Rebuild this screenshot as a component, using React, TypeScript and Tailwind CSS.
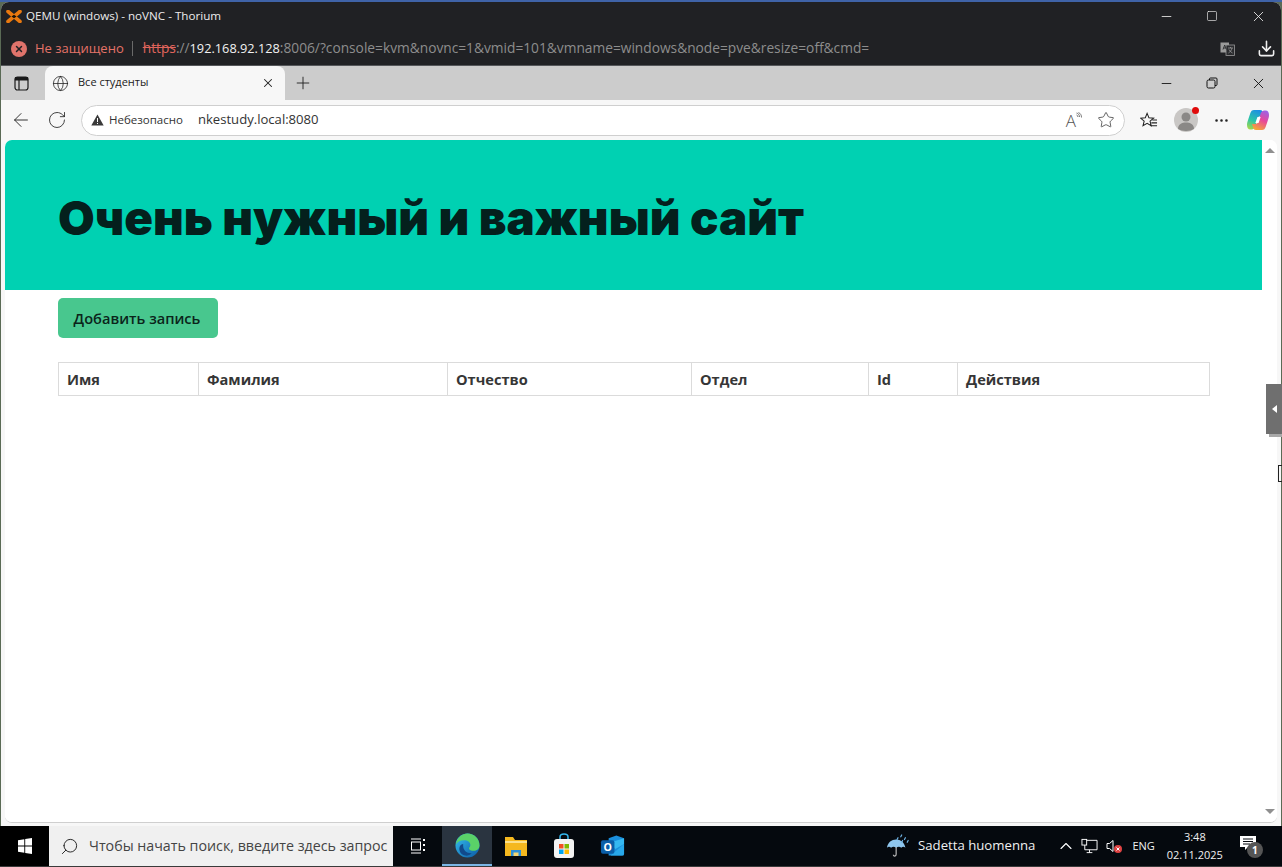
import React from "react";
import { ArrowLeft, RotateCw, X, Minus, Square, Plus, Globe, Star, MoreHorizontal, Download, Search, ChevronUp } from "lucide-react";

const F = { fontFamily: '"Open Sans","Noto Sans",sans-serif' };
const IN = { fontFamily: 'Inter,"Open Sans",sans-serif' };

function ProxmoxLogo() {
  return (
    <svg width="16" height="13" viewBox="0 0 16 13">
      <path d="M2 1.500 14 11.500M14 1.500 2 11.500" stroke="#e9790f" strokeWidth="3.600" strokeLinecap="round" />
      <path d="M8 4.800 10.500 6.500 8 8.200 5.500 6.500z" fill="#1a1208" />
    </svg>
  );
}

function Copilot() {
  const a = "M8 2h6c1.500 0 2.500.8 3 2.500L18 8h-3c-2 0-3 1-3.500 2.500L9.500 18c-.6 2-2 3.500-4 3.500H4.500C2 21.500 1 19.500 1 17c0-2 .5-3.500 1.200-5.500L4.200 5.500C5 3 6 2 8 2z";
  return (
    <svg width="24" height="24" viewBox="0 0 24 24">
      <defs>
        <linearGradient id="cpa" x1="0.600" y1="0" x2="0.200" y2="1"><stop offset="0" stopColor="#1b8fe3" /><stop offset="0.55" stopColor="#2bc5a8" /><stop offset="1" stopColor="#a6d84a" /></linearGradient>
        <linearGradient id="cpb" x1="0.600" y1="0" x2="0.200" y2="1"><stop offset="0" stopColor="#f4a23c" /><stop offset="0.5" stopColor="#e8489a" /><stop offset="1" stopColor="#9a63e8" /></linearGradient>
      </defs>
      <path d={a} fill="url(#cpa)" />
      <path d={a} fill="url(#cpb)" transform="rotate(180 12 12)" />
      <path d="M11.500 9h3.200L12.500 15H9.300z" fill="#fff" />
    </svg>
  );
}

function EdgeLogo() {
  return (
    <svg width="25" height="25" viewBox="0 0 26 26">
      <defs>
        <linearGradient id="edg" x1="0" y1="0" x2="1" y2="1"><stop offset="0" stopColor="#35c1f1" /><stop offset="1" stopColor="#0c59a4" /></linearGradient>
      </defs>
      <circle cx="13" cy="13" r="12.500" fill="url(#edg)" />
      <path d="M1 12C2 4 8 .5 13 .5 20 .5 25.500 6 25.500 13c0 3.500-3 5.500-6 5.500-2.500 0-5-1-5-2.500 0-1 1.500-1.500 1.500-3.500C16 9.500 13 7.500 9.500 7.500 5.500 7.500 2.500 9 1 12z" fill="#5ad168" />
      <path d="M8.500 13.500c0 4.500 4 8 9 7.500-2 2-4.500 3-7 2.500-5-1-7-6-5.500-9.500.6-1.500 2-2.500 3.500-2.500z" fill="#114a8b" />
    </svg>
  );
}

function Folder() {
  return (
    <svg width="24" height="24" viewBox="0 0 24 24">
      <path d="M1 3h8l2 3h12v16H1z" fill="#f5b81f" />
      <path d="M1 7h22v2H1z" fill="#fce08a" />
      <path d="M7 16h10v6H7z" fill="#2b8fd8" />
      <path d="M9.500 18.500h5V22h-5z" fill="#f5d470" />
    </svg>
  );
}

function Store() {
  return (
    <svg width="24" height="26" viewBox="0 0 24 26">
      <path d="M8 7V4c0-2 1.500-3 4-3s4 1 4 3v3" fill="none" stroke="#35b8ee" strokeWidth="1.500" />
      <rect x="2" y="6" width="20" height="19" rx="3" fill="#f3f3f3" />
      <rect x="7" y="11" width="4.500" height="4.500" fill="#f25022" />
      <rect x="12.500" y="11" width="4.500" height="4.500" fill="#7fba00" />
      <rect x="7" y="16.500" width="4.500" height="4.500" fill="#00a4ef" />
      <rect x="12.500" y="16.500" width="4.500" height="4.500" fill="#ffb900" />
    </svg>
  );
}

function Outlook() {
  return (
    <svg width="25" height="24" viewBox="0 0 26 24">
      <path d="M9 4 17 1l8 3v16a2 2 0 0 1-2 2H9z" fill="#1a8fdc" />
      <path d="M9 9l16-5v6l-9 5z" fill="#35b8f1" />
      <path d="M25 10v10a2 2 0 0 1-2 2H11z" fill="#28a8ea" />
      <rect x="1" y="6" width="14" height="14" rx="2" fill="#0a5ea8" />
      <text x="8" y="17" textAnchor="middle" fontSize="11" fontWeight="700" fill="#fff" fontFamily="Open Sans">O</text>
    </svg>
  );
}

function WinLogo() {
  return (
    <svg width="16" height="16" viewBox="0 0 14 16" fill="#fff">
      <path d="M0 2.200 6.300 1.200V7.500H0zM7.200 1 14 0v7.500H7.200zM0 8.400h6.300v6.400L0 13.800zM7.200 8.400H14V16l-6.800-1z" />
    </svg>
  );
}

function Umbrella() {
  return (
    <svg width="24" height="26" viewBox="0 0 26 26">
      <path d="M1 15C2 9 6 6 11 6s9 3 10 9c-1.500-1.500-3-1.500-4.500 0-1.500-1.500-3.500-1.500-5.500 0-2-1.500-4-1.500-5.500 0C4 13.500 2.500 13.500 1 15z" fill="#8fc6ee" />
      <path d="M11 14v8c0 2.500-3 2.500-3 .5" fill="none" stroke="#b9b9b9" strokeWidth="1.300" />
      <path d="M13 4l-1 2M17 1l-1 2M21 4l-1 2M24 7l-1 2M18 7l-1 2" stroke="#6fb4e6" strokeWidth="1.300" strokeLinecap="round" />
    </svg>
  );
}

function Translate() {
  return (
    <svg width="15" height="14" viewBox="0 0 15 14">
      <rect x="0.500" y="0.500" width="8.500" height="10" fill="#9a9a9a" />
      <rect x="6" y="3" width="8.500" height="10.500" fill="#2b2c2f" stroke="#9a9a9a" strokeWidth="0.800" />
      <path d="M3 7.500 4.700 3l1.700 4.500M3.600 6h2.200" stroke="#2b2c2f" strokeWidth="0.900" fill="none" />
      <path d="M8 6h5M10.500 5v1M12 6c-.5 2.500-2 4-3.500 5M9 7.500c.8 1.500 2 2.800 3.500 3.500" stroke="#9a9a9a" strokeWidth="0.800" fill="none" />
    </svg>
  );
}

const cols = [
  { t: "Имя", w: "w-[140px]" },
  { t: "Фамилия", w: "w-[249px]" },
  { t: "Отчество", w: "w-[244px]" },
  { t: "Отдел", w: "w-[177px]" },
  { t: "Id", w: "w-[89px]" },
  { t: "Действия", w: "flex-1" },
];

export default function App() {
  return (
    <div className="relative w-[1282px] h-[867px] overflow-hidden flex flex-col bg-[#5a6a55]" style={F}>
      <div className="h-[2px] bg-[#3f63a8] shrink-0" />
      {/* outer browser */}
      <div className="flex-1 min-h-0 flex flex-col rounded-t-[8px] overflow-hidden ml-px mr-px bg-[#f7f7f7]">
        <div className="h-[30px] bg-[#202124] shrink-0 flex items-center pl-[5px] pb-[2px] text-[#f0f0f0]">
          <ProxmoxLogo />
          <span className="ml-[4px] text-[11.650px] text-[#ececec]">QEMU (windows) - noVNC - Thorium</span>
          <div className="ml-auto flex items-center">
            <div className="w-[46px] flex justify-center"><Minus size={15} strokeWidth={1.3} /></div>
            <div className="w-[46px] flex justify-center"><Square size={12} strokeWidth={1.3} /></div>
            <div className="w-[46px] flex justify-center"><X size={17} strokeWidth={1.2} /></div>
          </div>
        </div>
        <div className="h-[34px] bg-[#202124] shrink-0 flex items-center pl-[10px] pr-[5px] border-b border-[#55575a]">
          <span className="w-[16px] h-[16px] rounded-full bg-[#e0736b] flex items-center justify-center"><X size={10} strokeWidth={3.5} className="text-[#202124]" /></span>
          <span className="ml-[8px] text-[13px] text-[#e57368]">Не защищено</span>
          <span className="ml-[8px] w-px h-[15px] bg-[#6a6a6a]" />
          <span className="ml-[10px] text-[13.740px] text-[#8d8d8d] whitespace-nowrap">
            <span className="line-through text-[#e0655c]">https</span>://<span className="text-[12.760px] text-[#f2f2f2]">192.168.92.128</span>:8006/?console=kvm&amp;novnc=1&amp;vmid=101&amp;vmname=windows&amp;node=pve&amp;resize=off&amp;cmd=
          </span>
          <div className="ml-auto flex items-center gap-[22px]">
            <Translate />
            <Download size={19} strokeWidth={2} className="text-[#f0f0f0]" />
          </div>
        </div>
        {/* inner browser tab strip */}
        <div className="h-[34px] bg-[#cccccc] shrink-0 flex items-end">
          <div className="w-[40px] h-full flex items-center justify-center">
            <svg width="15" height="15" viewBox="0 0 15 15" fill="none" stroke="#1a1a1a" strokeWidth="1.200"><rect x="1" y="1" width="13" height="13" rx="2.500" /><path d="M5 4V14" /><path d="M1.500 1.500h12V4h-12z" fill="#1a1a1a" /></svg>
          </div>
          <div className="ml-[4px] w-[240px] h-[34px] bg-[#f7f7f7] rounded-t-[8px] flex items-center pl-[7px] pr-[10px]">
            <Globe size={17} strokeWidth={1.1} className="text-[#222]" />
            <span className="ml-[9px] text-[11px] text-[#222] -mt-[2px]">Все студенты</span>
            <X size={14} strokeWidth={1.8} className="ml-auto text-[#222]" />
          </div>
          <div className="w-[36px] h-full flex items-center justify-center"><Plus size={20} strokeWidth={1.1} className="text-[#222]" /></div>
          <div className="ml-auto h-full flex items-center text-[#111]">
            <div className="w-[46px] flex justify-center"><Minus size={15} strokeWidth={1.4} /></div>
            <div className="w-[46px] flex justify-center">
              <svg width="12" height="12" viewBox="0 0 12 12" fill="none" stroke="#111" strokeWidth="1"><rect x="1" y="3" width="8" height="8" rx="1.500" /><path d="M3.500 3V2a1 1 0 0 1 1-1H10a1 1 0 0 1 1 1v5.500a1 1 0 0 1-1 1H9" /></svg>
            </div>
            <div className="w-[46px] flex justify-center"><X size={17} strokeWidth={1.3} /></div>
          </div>
        </div>
        {/* inner toolbar */}
        <div className="h-[40px] bg-[#f7f7f7] shrink-0 flex items-center">
          <div className="w-[39px] flex justify-center"><ArrowLeft size={22} strokeWidth={1} className="text-[#222]" /></div>
          <div className="w-[34px] flex justify-center"><RotateCw size={20} strokeWidth={1} className="text-[#222]" /></div>
          <div className="ml-[7px] w-[1044px] h-[31px] bg-white rounded-full border border-[#cfcfcf] flex items-center pl-[9px] pr-[9px]">
            <svg width="13" height="12" viewBox="0 0 13 12"><path d="M6.500.5 12.700 11.500H.3z" fill="#3a3a3a" /><path d="M6 4h1v4H6zM6 9h1v1H6z" fill="#fff" /></svg>
            <span className="ml-[5px] text-[11.500px] text-[#333]">Небезопасно</span>
            <span className="ml-[15px] text-[13.100px] text-[#333]">nkestudy.local:8080</span>
            <div className="ml-auto flex items-center gap-[15px]">
              <span className="flex items-start text-[#555]">
                <span className="text-[17px] leading-none font-light">A</span>
                <svg width="6" height="9" viewBox="0 0 6 9" fill="none" stroke="#555" strokeWidth="0.800"><path d="M.5 1c2 .5 3 2 3 4M.5 3c1 .3 1.500 1 1.500 2M2.500.5C4.500 1.500 5.500 3 5.500 5.500" /></svg>
              </span>
              <Star size={18} strokeWidth={1} className="text-[#333]" />
            </div>
          </div>
          <div className="ml-[15px] w-[18px] flex justify-center">
            <svg width="19" height="17" viewBox="0 0 19 17" fill="none" stroke="#222" strokeWidth="1.100"><path d="M7.500 1 9.400 5.600l5 .4-3.800 3.200 1.200 4.800-4.300-2.600L3.200 14l1.200-4.800L.6 6l5-.4z" /><path d="M13 8h5M12 11h6M11 14h7" /></svg>
          </div>
          <div className="ml-[16px] relative w-[24px] h-[24px] rounded-full bg-[#c9c7c5] flex items-center justify-center">
            <svg width="22" height="22" viewBox="0 0 22 22" fill="#8a8886"><circle cx="11" cy="8" r="4.500" /><path d="M3 20c0-5 4-6.500 8-6.500s8 1.500 8 6.500c-2 1.300-5 2-8 2s-6-.7-8-2z" /></svg>
            <span className="absolute right-[-1px] top-[-1px] w-[7px] h-[7px] rounded-full bg-[#e00b0b]" />
          </div>
          <div className="ml-[12px] w-[22px] flex justify-center"><MoreHorizontal size={17} strokeWidth={1.7} className="text-[#222]" /></div>
          <div className="ml-[14px]"><Copilot /></div>
        </div>
        {/* page */}
        <div className="flex-1 min-h-0 flex pl-[4px] pr-[4px] bg-[#f7f7f7]">
          <div className="flex-1 min-w-0 flex rounded-[7px] overflow-hidden bg-white border-b border-[#cfcfcf]">
            <div className="flex-1 min-w-0 bg-white flex flex-col">
              <div className="h-[150px] bg-[#00d1b2] shrink-0 flex items-center pl-[53px]">
                <h1 className="text-[47.400px] leading-none font-black text-[#04201d] whitespace-nowrap mt-[6px]" style={IN}>Очень нужный и важный сайт</h1>
              </div>
              <div className="pl-[53px] pr-[52px] pt-[8px]">
                <button className="h-[40px] w-[160px] pt-px pr-[2px] rounded-[5px] bg-[#48c78e] text-[14.600px] font-semibold text-[#0b241a]">Добавить запись</button>
                <div className="mt-[24px] h-[34px] pt-0 flex border border-[#dbdbdb] text-[14.600px] font-bold text-[#363636]">
                  {cols.map((c, i) => (
                    <div key={c.t} className={`${c.w} h-full flex items-center pl-[8px] pt-[2px] ${i < cols.length - 1 ? "border-r border-[#dbdbdb]" : ""}`}>{c.t}</div>
                  ))}
                </div>
              </div>
            </div>
            <div className="w-[15px] bg-white flex flex-col items-center justify-between py-[8px]">
              <span className="w-0 h-0 border-x-[5px] border-x-transparent border-b-[5px] border-b-[#8f8f8f]" />
              <span className="w-0 h-0 border-x-[5px] border-x-transparent border-t-[5px] border-t-[#8f8f8f]" />
            </div>
          </div>
        </div>
        <div className="h-[3px] bg-[#f7f7f7] shrink-0" />
      </div>
      {/* noVNC side handle and remote cursor, lying over the page */}
      <div className="absolute left-[1266px] top-[384px] w-[16px] h-[50px] bg-[#6f6f6f] flex items-center justify-center">
        <span className="w-0 h-0 border-y-[4px] border-y-transparent border-r-[5px] border-r-white" />
      </div>
      <div className="absolute left-[1269px] top-[434px] w-[13px] h-[3px] bg-[#a8a8a8]" />
      <div className="absolute left-[1278px] top-[465px] w-[4px] h-[17px] border-y border-l border-[#222]" />
      {/* taskbar */}
      <div className="h-[41px] bg-[#05090e] shrink-0 flex items-center text-white border-b border-[#3a3a3a]">
        <div className="w-[49px] h-full bg-black flex items-center justify-center"><WinLogo /></div>
        <div className="w-[344px] h-full bg-[#f0f0f0] flex items-center pl-[11px]">
          <Search size={19} strokeWidth={1.2} className="text-[#222] -scale-x-100" />
          <span className="ml-[10px] text-[14.250px] text-[#444] whitespace-nowrap">Чтобы начать поиск, введите здесь запрос</span>
        </div>
        <div className="w-[49px] flex justify-center">
          <svg width="16" height="16" viewBox="0 0 16 16" fill="none" stroke="#fff" strokeWidth="1"><path d="M1 1h10M1 15h10" /><rect x="1.500" y="4" width="9" height="8" /><path d="M14 1v2M14 6v2M14 11v2" strokeWidth="2" /></svg>
        </div>
        <div className="w-[50px] h-full bg-[#2a3440] border-b-[2px] border-[#7ab6e6] flex items-center justify-center"><EdgeLogo /></div>
        <div className="w-[48px] flex justify-center"><Folder /></div>
        <div className="w-[48px] flex justify-center"><Store /></div>
        <div className="w-[48px] flex justify-center"><Outlook /></div>
        <div className="ml-[250px] flex items-center"><Umbrella /><span className="ml-[8px] text-[13.200px] text-[#f0f0f0] whitespace-nowrap">Sadetta huomenna</span></div>
        <ChevronUp size={20} strokeWidth={1.3} className="ml-[21px]" />
        <svg className="ml-[5px]" width="17" height="16" viewBox="0 0 18 16" fill="none" stroke="#fff" strokeWidth="1"><path d="M4 2h13v10H4zM9 12v3M6 15h6" /><rect x="1" y="1" width="5" height="6" fill="#05090e" /></svg>
        <svg className="ml-[8px]" width="17" height="16" viewBox="0 0 17 16"><path d="M1 5.500h2.500L7 2.500v11L3.500 10.500H1z" fill="none" stroke="#fff" strokeWidth="1" /><circle cx="12" cy="11" r="4" fill="#e04343" /><path d="M10.500 9.500l3 3M13.500 9.500l-3 3" stroke="#fff" strokeWidth="1" /></svg>
        <span className="ml-[9px] text-[11px] text-[#f0f0f0]">ENG</span>
        <div className="ml-[13px] w-[54px] flex flex-col items-center text-[11px] leading-[18px] text-[#f0f0f0]"><span>3:48</span><span>02.11.2025</span></div>
        <div className="ml-[18px] relative w-[22px] h-[20px]">
          <svg width="17" height="15" viewBox="0 0 17 15" fill="#fff"><path d="M0 0h16v11H8l-3 3v-3H0z" /><path d="M3 3h10M3 5.500h10M3 8h7" stroke="#05090e" strokeWidth="1" /></svg>
          <span className="absolute left-[7px] top-[6px] w-[16px] h-[16px] rounded-full bg-[#555] text-[10px] leading-[16px] text-center font-bold">1</span>
        </div>
      </div>
    </div>
  );
}
